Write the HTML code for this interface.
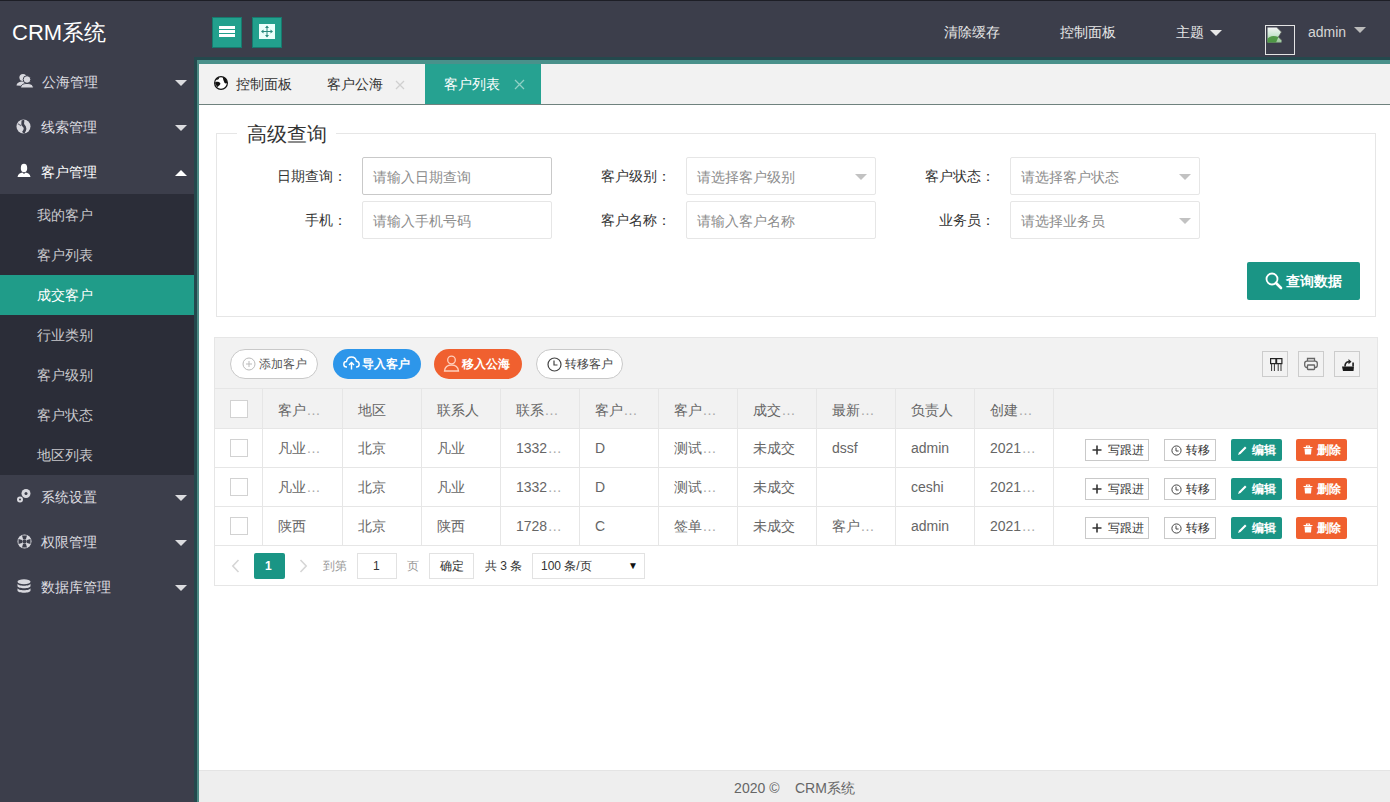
<!DOCTYPE html>
<html><head><meta charset="utf-8">
<style>
*{box-sizing:border-box;margin:0;padding:0}
html,body{width:1390px;height:802px;overflow:hidden;background:#fff;font-family:"Liberation Sans",sans-serif;font-size:14px;color:#666}
.abs{position:absolute}
#header{position:absolute;left:0;top:0;width:1390px;height:60px;background:#3c3e4b;border-top:1px solid #1d1e26}
#side{position:absolute;left:0;top:60px;width:196px;height:742px;background:#3c3e4b}
#bl{position:absolute;left:194px;top:57px;width:3px;height:745px;background:#24494d}
#bl2{position:absolute;left:197px;top:60px;width:2px;height:742px;background:#4e8a84}
#bt{position:absolute;left:194px;top:57px;width:1196px;height:3px;background:#24494d}
#bt2{position:absolute;left:197px;top:60px;width:1193px;height:4px;background:#4a918b}
.t{position:absolute;white-space:nowrap;line-height:20px}
.w{color:#fff}
.nav{position:absolute;left:0;width:196px;height:45px}
.sub{position:absolute;left:0;top:194px;width:196px;height:281px;background:#2b2d38}
.tri{position:absolute;width:0;height:0;border-left:6px solid transparent;border-right:6px solid transparent}
.tabs{position:absolute;left:199px;top:64px;width:1191px;height:40px;background:#f2f2f2}
.tabline{position:absolute;left:199px;top:104px;width:1191px;height:1px;background:#6f827e}
.fs{position:absolute;left:216px;top:133px;width:1160px;height:184px;border:1px solid #e6e6e6}
.inp{position:absolute;width:190px;height:38px;border:1px solid #e6e6e6;background:#fff;border-radius:2px}
.ph{position:absolute;left:10px;top:9px;color:#8c8c8c;line-height:20px;white-space:nowrap}
.lbl{position:absolute;width:110px;text-align:right;color:#333;line-height:20px;white-space:nowrap}
.tbl{position:absolute;left:214px;top:337px;width:1164px;height:249px;border:1px solid #e6e6e6}
.btn{position:absolute;height:30px;border-radius:100px;font-size:12px;line-height:28px;white-space:nowrap}
.cb{position:absolute;width:18px;height:18px;border:1px solid #d2d2d2;background:#fff;border-radius:0}
.vl{position:absolute;width:1px;background:#e6e6e6}
.hl{position:absolute;height:1px;background:#e6e6e6}
.cell{position:absolute;line-height:20px;white-space:nowrap;width:49px;color:#666}
.el{color:#a8a8a8;margin-left:1px;letter-spacing:0.6px}
.xs{position:absolute;height:22px;font-size:12px;line-height:20px;white-space:nowrap;border-radius:2px}
</style></head><body>

<!-- HEADER -->
<div id="header"></div>
<div class="t w" style="left:12px;top:21px;font-size:22px;line-height:24px">CRM系统</div>
<div class="abs" style="left:212px;top:17px;width:30px;height:31px;background:#22a08d;border:1px solid #167a6e"></div>
<div class="abs" style="left:219px;top:26px;width:16px;height:3px;background:#fff"></div>
<div class="abs" style="left:219px;top:30px;width:16px;height:3px;background:#fff"></div>
<div class="abs" style="left:219px;top:34px;width:16px;height:3px;background:#fff"></div>
<div class="abs" style="left:252px;top:17px;width:30px;height:31px;background:#22a08d;border:1px solid #167a6e"></div>
<svg class="abs" style="left:259px;top:24px" width="16" height="15" viewBox="0 0 16 15">
<rect x="0" y="0" width="16" height="15" fill="#eafffb"/>
<path d="M8 2.5 V12.5 M3 7.5 H13" stroke="#2a8a7e" stroke-width="1"/>
<path d="M8 1.5 L10 4 H6 Z M8 13.5 L10 11 H6 Z M2 7.5 L4.5 5.5 V9.5 Z M14 7.5 L11.5 5.5 V9.5 Z" fill="#2a8a7e"/>
</svg>
<div class="t" style="left:944px;top:22px;color:#e8e8e8">清除缓存</div>
<div class="t" style="left:1060px;top:22px;color:#e8e8e8">控制面板</div>
<div class="t" style="left:1176px;top:22px;color:#e8e8e8">主题</div>
<div class="tri" style="left:1210px;top:30px;border-top:6px solid #e8e8e8"></div>
<div class="abs" style="left:1265px;top:25px;width:30px;height:30px;border:1px solid #e4e4e4"></div>
<svg class="abs" style="left:1267px;top:27px" width="17" height="17" viewBox="0 0 17 17">
<defs><linearGradient id="pg" x1="0" y1="0" x2="0" y2="1"><stop offset="0" stop-color="#f4f4f4"/><stop offset="0.45" stop-color="#cfe8d6"/><stop offset="1" stop-color="#9cc79a"/></linearGradient></defs>
<path d="M0.5 0.5 H10 L14.5 5 L11.5 10 L14.5 13 V15.5 H0.5 Z" fill="url(#pg)"/>
<path d="M0.5 11.5 C4 8 8 9 11.5 10 L9 15.5 H0.5 Z" fill="#3f8e35" opacity="0.85"/>
<path d="M10 0.5 L14.5 5 L11.5 10 L14.5 13" fill="none" stroke="#555" stroke-width="0.8"/>
</svg>
<div class="t" style="left:1308px;top:22px;color:#d6d6d6">admin</div>
<div class="tri" style="left:1354px;top:27px;border-top:6px solid #bbb"></div>

<!-- SIDEBAR -->
<div id="side"></div>
<div class="sub"></div>
<div class="abs" style="left:0;top:275px;width:196px;height:40px;background:#209c89"></div>

<svg class="abs" style="left:16px;top:73px" width="18" height="16" viewBox="0 0 18 16">
<circle cx="7" cy="4.5" r="3.6" fill="#d8d8de"/>
<path d="M0.5 12.5 C1 9.5 3.5 8.5 7 8.5 C8 8.5 9 8.7 9.5 9 L8 13 Z" fill="#d8d8de"/>
<circle cx="11" cy="6.5" r="3.8" fill="#d8d8de" stroke="#3c3e4b" stroke-width="1"/>
<path d="M4.5 15 C5 11.5 7.5 10.5 11 10.5 C14.5 10.5 17 11.5 17.5 15 Z" fill="#d8d8de" stroke="#3c3e4b" stroke-width="1"/>
</svg>
<div class="t" style="left:42px;top:72px;color:#dcdce0">公海管理</div>
<div class="tri" style="left:175px;top:80px;border-top:6px solid #dcdce0"></div>

<svg class="abs" style="left:16px;top:119px" width="15" height="15" viewBox="0 0 15 15">
<circle cx="7.5" cy="7.5" r="7" fill="#d8d8de"/>
<path d="M6.8 1.2 C7.5 3.5 5.5 4.5 7.5 6.5 C9.5 8.5 10 10 7.2 13.8" fill="none" stroke="#3c3e4b" stroke-width="2.8"/>
<path d="M1.8 4.8 C3.5 5.5 4.5 6 5 7" fill="none" stroke="#6a6c78" stroke-width="1.2"/>
</svg>
<div class="t" style="left:41px;top:117px;color:#dcdce0">线索管理</div>
<div class="tri" style="left:175px;top:125px;border-top:6px solid #dcdce0"></div>

<svg class="abs" style="left:17px;top:163px" width="14" height="15" viewBox="0 0 14 15">
<ellipse cx="7" cy="5" rx="3.2" ry="4.3" fill="#fff"/>
<path d="M0.5 14 C1 11 3 10 5.5 9.5 L7 11 L8.5 9.5 C11 10 13 11 13.5 14 Z" fill="#fff"/>
</svg>
<div class="t w" style="left:41px;top:162px">客户管理</div>
<div class="tri" style="left:175px;top:170px;border-bottom:6px solid #fff"></div>

<div class="t" style="left:37px;top:205px;color:#c8c8cc">我的客户</div>
<div class="t" style="left:37px;top:245px;color:#c8c8cc">客户列表</div>
<div class="t w" style="left:37px;top:285px">成交客户</div>
<div class="t" style="left:37px;top:325px;color:#c8c8cc">行业类别</div>
<div class="t" style="left:37px;top:365px;color:#c8c8cc">客户级别</div>
<div class="t" style="left:37px;top:405px;color:#c8c8cc">客户状态</div>
<div class="t" style="left:37px;top:445px;color:#c8c8cc">地区列表</div>

<svg class="abs" style="left:16px;top:488px" width="16" height="16" viewBox="0 0 16 16">
<circle cx="10" cy="5.5" r="4.5" fill="#d8d8de"/><circle cx="10" cy="5.5" r="1.5" fill="#3c3e4b"/>
<circle cx="4" cy="11.5" r="3" fill="#d8d8de"/><circle cx="4" cy="11.5" r="1" fill="#3c3e4b"/>
</svg>
<div class="t" style="left:41px;top:487px;color:#dcdce0">系统设置</div>
<div class="tri" style="left:175px;top:495px;border-top:6px solid #dcdce0"></div>

<svg class="abs" style="left:17px;top:534px" width="15" height="15" viewBox="0 0 15 15">
<circle cx="7.5" cy="7.5" r="7" fill="#d8d8de"/>
<circle cx="7.5" cy="7.5" r="2.2" fill="#3c3e4b"/>
<path d="M5 1.5 H10 L9 5 H6 Z M5 13.5 H10 L9 10 H6 Z M1.5 5 V10 L5 9 V6 Z M13.5 5 V10 L10 9 V6 Z" fill="#3c3e4b"/>
</svg>
<div class="t" style="left:41px;top:532px;color:#dcdce0">权限管理</div>
<div class="tri" style="left:175px;top:540px;border-top:6px solid #dcdce0"></div>

<svg class="abs" style="left:17px;top:579px" width="14" height="15" viewBox="0 0 14 15">
<ellipse cx="7" cy="2.8" rx="6.5" ry="2.5" fill="#d8d8de"/>
<path d="M0.5 4.5 C0.5 7.5 13.5 7.5 13.5 4.5 V7 C13.5 10 0.5 10 0.5 7 Z" fill="#d8d8de"/>
<path d="M0.5 9 C0.5 12 13.5 12 13.5 9 V11.5 C13.5 14.5 0.5 14.5 0.5 11.5 Z" fill="#d8d8de"/>
</svg>
<div class="t" style="left:41px;top:577px;color:#dcdce0">数据库管理</div>
<div class="tri" style="left:175px;top:585px;border-top:6px solid #dcdce0"></div>

<!-- BODY FRAME -->
<div id="bt"></div>
<div id="bl"></div>
<div id="bt2"></div>
<div id="bl2"></div>
<div class="tabs"></div>
<div class="tabline"></div>
<svg class="abs" style="left:214px;top:76px" width="14" height="14" viewBox="0 0 14 14">
<circle cx="7" cy="7" r="6.4" fill="#fff" stroke="#111" stroke-width="1.2"/>
<path d="M1.8 4.2 C2.5 2.8 3.8 1.8 5.2 1.3 L4.8 3 C3.8 3.6 2.8 4.1 1.8 4.2 Z" fill="#111"/>
<path d="M1.2 6.2 C2.8 5.4 5 5.6 6.2 7 C6.8 8 5.8 9.4 4.8 9.8 C4.2 10.8 3.6 11.2 3 10.8 C2.6 9.8 2.2 9 1.2 8.2 Z" fill="#111"/>
<path d="M8.8 1 C11 1.6 12.8 3.6 13.3 6.4 C12.6 7.6 11.6 7.8 10.6 7 C10 5.4 9 4 8.8 1 Z" fill="#111"/>
</svg>
<div class="t" style="left:236px;top:74px;color:#333">控制面板</div>
<div class="t" style="left:327px;top:74px;color:#333">客户公海</div>
<svg class="abs" style="left:395px;top:80px" width="10" height="10" viewBox="0 0 10 10"><path d="M1 1 L9 9 M9 1 L1 9" stroke="#d0d0d0" stroke-width="1.3"/></svg>
<div class="abs" style="left:425px;top:64px;width:116px;height:40px;background:#26a291"></div>
<div class="t w" style="left:444px;top:74px">客户列表</div>
<svg class="abs" style="left:514px;top:79px" width="11" height="11" viewBox="0 0 11 11"><path d="M1 1 L10 10 M10 1 L1 10" stroke="#8fd0c5" stroke-width="1.3"/></svg>

<!-- FIELDSET -->
<div class="fs"></div>
<div class="abs" style="left:237px;top:120px;width:99px;height:26px;background:#fff"></div>
<div class="t" style="left:247px;top:121px;font-size:20px;line-height:26px;color:#333">高级查询</div>

<div class="lbl" style="left:237px;top:166px">日期查询：</div>
<div class="inp" style="left:362px;top:157px;border-color:#c9c9c9"><div class="ph">请输入日期查询</div></div>
<div class="lbl" style="left:561px;top:166px">客户级别：</div>
<div class="inp" style="left:686px;top:157px"><div class="ph">请选择客户级别</div><div class="tri" style="left:168px;top:16px;border-top:6px solid #c2c2c2"></div></div>
<div class="lbl" style="left:885px;top:166px">客户状态：</div>
<div class="inp" style="left:1010px;top:157px"><div class="ph">请选择客户状态</div><div class="tri" style="left:168px;top:16px;border-top:6px solid #c2c2c2"></div></div>

<div class="lbl" style="left:237px;top:210px">手机：</div>
<div class="inp" style="left:362px;top:201px"><div class="ph">请输入手机号码</div></div>
<div class="lbl" style="left:561px;top:210px">客户名称：</div>
<div class="inp" style="left:686px;top:201px"><div class="ph">请输入客户名称</div></div>
<div class="lbl" style="left:885px;top:210px">业务员：</div>
<div class="inp" style="left:1010px;top:201px"><div class="ph">请选择业务员</div><div class="tri" style="left:168px;top:16px;border-top:6px solid #c2c2c2"></div></div>

<div class="abs" style="left:1247px;top:262px;width:113px;height:38px;background:#1a9585;border-radius:2px"></div>
<svg class="abs" style="left:1265px;top:272px" width="18" height="18" viewBox="0 0 18 18">
<circle cx="7" cy="7" r="5.5" fill="none" stroke="#fff" stroke-width="1.8"/>
<path d="M11 11 L16 16" stroke="#fff" stroke-width="2.6" stroke-linecap="round"/>
</svg>
<div class="t w" style="left:1286px;top:271px;font-weight:700">查询数据</div>

<!-- TABLE -->
<div class="tbl"></div>
<div class="abs" style="left:215px;top:338px;width:1162px;height:90px;background:#f2f2f2"></div>
<div class="hl" style="left:215px;top:388px;width:1162px"></div>
<div class="hl" style="left:215px;top:428px;width:1162px"></div>
<div class="hl" style="left:215px;top:467px;width:1162px"></div>
<div class="hl" style="left:215px;top:506px;width:1162px"></div>
<div class="hl" style="left:215px;top:545px;width:1162px"></div>

<div class="btn" style="left:230px;top:349px;width:88px;border:1px solid #c9c9c9;background:#fff;color:#555">
<svg class="abs" style="left:11px;top:7px" width="14" height="14" viewBox="0 0 14 14"><circle cx="7" cy="7" r="6" fill="none" stroke="#bbb" stroke-width="1"/><path d="M7 4 V10 M4 7 H10" stroke="#bbb" stroke-width="1"/></svg>
<span class="abs" style="left:28px;top:0">添加客户</span></div>
<div class="btn" style="left:333px;top:349px;width:88px;background:#2d96ea;color:#fff">
<svg class="abs" style="left:10px;top:7px" width="17" height="14" viewBox="0 0 17 14"><path d="M4 11 H3.5 C1.8 11 0.8 9.8 0.8 8.2 C0.8 6.6 2 5.5 3.5 5.5 C3.8 3 5.8 1 8.5 1 C11 1 13 2.8 13.3 5.2 C15 5.3 16.2 6.6 16.2 8.2 C16.2 9.8 15 11 13.3 11 H13" fill="none" stroke="#fff" stroke-width="1.4"/><path d="M8.5 13.5 V6.5 M6 9 L8.5 6.5 L11 9" fill="none" stroke="#fff" stroke-width="1.4"/></svg>
<span class="abs" style="left:29px;top:1px;font-weight:700">导入客户</span></div>
<div class="btn" style="left:434px;top:349px;width:88px;background:#f0602f;color:#fff">
<svg class="abs" style="left:9px;top:6px" width="17" height="17" viewBox="0 0 17 17"><circle cx="8.5" cy="5" r="3.8" fill="none" stroke="#ffd0bd" stroke-width="1.3"/><path d="M1.5 16 C2 11.5 4.5 10 8.5 10 C12.5 10 15 11.5 15.5 16 Z" fill="none" stroke="#ffd0bd" stroke-width="1.3"/></svg>
<span class="abs" style="left:28px;top:1px;font-weight:700">移入公海</span></div>
<div class="btn" style="left:536px;top:349px;width:87px;border:1px solid #c9c9c9;background:#fff;color:#444">
<svg class="abs" style="left:10px;top:7px" width="15" height="15" viewBox="0 0 15 15"><circle cx="7.5" cy="7.5" r="6.5" fill="none" stroke="#444" stroke-width="1.2"/><path d="M7 3.5 V8 H10.5" fill="none" stroke="#444" stroke-width="1.2"/></svg>
<span class="abs" style="left:28px;top:0">转移客户</span></div>

<div class="abs" style="left:1262px;top:351px;width:26px;height:26px;border:1px solid #ccc"></div>
<svg class="abs" style="left:1267px;top:356px" width="16" height="16" viewBox="0 0 16 16"><rect x="3.6" y="2.6" width="5.3" height="5" fill="none" stroke="#222" stroke-width="1.2"/><rect x="9.6" y="2.6" width="5.3" height="5" fill="none" stroke="#222" stroke-width="1.2"/><path d="M4.6 7.5 V15 M7.4 7.5 V15 M11.2 7.5 V15 M14 7.5 V15" stroke="#333" stroke-width="1"/></svg>
<div class="abs" style="left:1298px;top:351px;width:26px;height:26px;border:1px solid #ccc"></div>
<svg class="abs" style="left:1303px;top:356px" width="16" height="16" viewBox="0 0 16 16"><path d="M4.5 5 V2.5 H11.5 V5" fill="none" stroke="#666" stroke-width="1.3"/><rect x="1.7" y="5.2" width="12.6" height="6.3" rx="2.2" fill="none" stroke="#666" stroke-width="1.3"/><rect x="4.5" y="9" width="7" height="4.5" rx="0.5" fill="#f2f2f2" stroke="#666" stroke-width="1.3"/></svg>
<div class="abs" style="left:1334px;top:351px;width:26px;height:26px;border:1px solid #ccc"></div>
<svg class="abs" style="left:1339px;top:356px" width="16" height="16" viewBox="0 0 16 16"><path d="M3 10.5 H15 L14.5 15 H4 Z" fill="#1a1a1a"/><path d="M13.2 6.5 H15 V10.5 H13.2 Z" fill="#333"/><path d="M6 10.5 C6 7.5 7.5 5.8 10 5.8" fill="none" stroke="#222" stroke-width="1.6"/><path d="M9.5 3 L12.5 5.8 L9.5 8.2 Z" fill="#222"/></svg>

<!-- column lines -->
<div class="vl" style="left:262px;top:388px;height:157px"></div>
<div class="vl" style="left:342px;top:388px;height:157px"></div>
<div class="vl" style="left:421px;top:388px;height:157px"></div>
<div class="vl" style="left:500px;top:388px;height:157px"></div>
<div class="vl" style="left:579px;top:388px;height:157px"></div>
<div class="vl" style="left:658px;top:388px;height:157px"></div>
<div class="vl" style="left:737px;top:388px;height:157px"></div>
<div class="vl" style="left:816px;top:388px;height:157px"></div>
<div class="vl" style="left:895px;top:388px;height:157px"></div>
<div class="vl" style="left:974px;top:388px;height:157px"></div>
<div class="vl" style="left:1053px;top:388px;height:157px"></div>

<div class="cb" style="left:230px;top:400px"></div>
<div class="cb" style="left:230px;top:439px"></div>
<div class="cb" style="left:230px;top:478px"></div>
<div class="cb" style="left:230px;top:517px"></div>

<div id="rows"></div>
<div class="cell" style="left:278px;top:400px">客户<span class="el">...</span></div>
<div class="cell" style="left:358px;top:400px">地区</div>
<div class="cell" style="left:437px;top:400px">联系人</div>
<div class="cell" style="left:516px;top:400px">联系<span class="el">...</span></div>
<div class="cell" style="left:595px;top:400px">客户<span class="el">...</span></div>
<div class="cell" style="left:674px;top:400px">客户<span class="el">...</span></div>
<div class="cell" style="left:753px;top:400px">成交<span class="el">...</span></div>
<div class="cell" style="left:832px;top:400px">最新<span class="el">...</span></div>
<div class="cell" style="left:911px;top:400px">负责人</div>
<div class="cell" style="left:990px;top:400px">创建<span class="el">...</span></div>

<div class="cell" style="left:278px;top:438px">凡业<span class="el">...</span></div>
<div class="cell" style="left:358px;top:438px">北京</div>
<div class="cell" style="left:437px;top:438px">凡业</div>
<div class="cell" style="left:516px;top:438px">1332<span class="el">...</span></div>
<div class="cell" style="left:595px;top:438px">D</div>
<div class="cell" style="left:674px;top:438px">测试<span class="el">...</span></div>
<div class="cell" style="left:753px;top:438px">未成交</div>
<div class="cell" style="left:832px;top:438px">dssf</div>
<div class="cell" style="left:911px;top:438px">admin</div>
<div class="cell" style="left:990px;top:438px">2021<span class="el">...</span></div>

<div class="cell" style="left:278px;top:477px">凡业<span class="el">...</span></div>
<div class="cell" style="left:358px;top:477px">北京</div>
<div class="cell" style="left:437px;top:477px">凡业</div>
<div class="cell" style="left:516px;top:477px">1332<span class="el">...</span></div>
<div class="cell" style="left:595px;top:477px">D</div>
<div class="cell" style="left:674px;top:477px">测试<span class="el">...</span></div>
<div class="cell" style="left:753px;top:477px">未成交</div>
<div class="cell" style="left:911px;top:477px">ceshi</div>
<div class="cell" style="left:990px;top:477px">2021<span class="el">...</span></div>

<div class="cell" style="left:278px;top:516px">陕西</div>
<div class="cell" style="left:358px;top:516px">北京</div>
<div class="cell" style="left:437px;top:516px">陕西</div>
<div class="cell" style="left:516px;top:516px">1728<span class="el">...</span></div>
<div class="cell" style="left:595px;top:516px">C</div>
<div class="cell" style="left:674px;top:516px">签单<span class="el">...</span></div>
<div class="cell" style="left:753px;top:516px">未成交</div>
<div class="cell" style="left:832px;top:516px">客户<span class="el">...</span></div>
<div class="cell" style="left:911px;top:516px">admin</div>
<div class="cell" style="left:990px;top:516px">2021<span class="el">...</span></div>

<!-- action buttons rows -->
<div class="xs" style="left:1085px;top:439px;width:64px;border:1px solid #c9c9c9;background:#fff;color:#333;border-radius:0"><svg class="abs" style="left:6px;top:5px" width="10" height="10" viewBox="0 0 10 10"><path d="M5 0.5 V9.5 M0.5 5 H9.5" stroke="#333" stroke-width="1.6"/></svg><span class="abs" style="left:22px;top:0">写跟进</span></div>
<div class="xs" style="left:1164px;top:439px;width:52px;border:1px solid #c9c9c9;background:#fff;color:#333;border-radius:0"><svg class="abs" style="left:6px;top:5px" width="11" height="11" viewBox="0 0 11 11"><circle cx="5.5" cy="5.5" r="4.6" fill="none" stroke="#444" stroke-width="1"/><path d="M5 2.6 V6 H7.6" fill="none" stroke="#444" stroke-width="1"/></svg><span class="abs" style="left:21px;top:0">转移</span></div>
<div class="xs" style="left:1231px;top:439px;width:51px;background:#1a9585;color:#fff"><svg class="abs" style="left:6px;top:6px" width="11" height="11" viewBox="0 0 11 11"><path d="M1 10 L2 7.5 L8 1.5 L9.5 3 L3.5 9 Z" fill="#fff"/></svg><span class="abs" style="left:21px;top:1px;font-weight:700">编辑</span></div>
<div class="xs" style="left:1296px;top:439px;width:51px;background:#f0602f;color:#fff"><svg class="abs" style="left:7px;top:6px" width="10" height="10" viewBox="0 0 10 10"><path d="M0.5 2.5 H9.5 M3.5 2.5 V1 H6.5 V2.5" fill="none" stroke="#fff" stroke-width="1.2"/><path d="M1.5 3.5 H8.5 L8 9.5 H2 Z" fill="#fff"/></svg><span class="abs" style="left:21px;top:1px;font-weight:700">删除</span></div>
<div class="xs" style="left:1085px;top:478px;width:64px;border:1px solid #c9c9c9;background:#fff;color:#333;border-radius:0"><svg class="abs" style="left:6px;top:5px" width="10" height="10" viewBox="0 0 10 10"><path d="M5 0.5 V9.5 M0.5 5 H9.5" stroke="#333" stroke-width="1.6"/></svg><span class="abs" style="left:22px;top:0">写跟进</span></div>
<div class="xs" style="left:1164px;top:478px;width:52px;border:1px solid #c9c9c9;background:#fff;color:#333;border-radius:0"><svg class="abs" style="left:6px;top:5px" width="11" height="11" viewBox="0 0 11 11"><circle cx="5.5" cy="5.5" r="4.6" fill="none" stroke="#444" stroke-width="1"/><path d="M5 2.6 V6 H7.6" fill="none" stroke="#444" stroke-width="1"/></svg><span class="abs" style="left:21px;top:0">转移</span></div>
<div class="xs" style="left:1231px;top:478px;width:51px;background:#1a9585;color:#fff"><svg class="abs" style="left:6px;top:6px" width="11" height="11" viewBox="0 0 11 11"><path d="M1 10 L2 7.5 L8 1.5 L9.5 3 L3.5 9 Z" fill="#fff"/></svg><span class="abs" style="left:21px;top:1px;font-weight:700">编辑</span></div>
<div class="xs" style="left:1296px;top:478px;width:51px;background:#f0602f;color:#fff"><svg class="abs" style="left:7px;top:6px" width="10" height="10" viewBox="0 0 10 10"><path d="M0.5 2.5 H9.5 M3.5 2.5 V1 H6.5 V2.5" fill="none" stroke="#fff" stroke-width="1.2"/><path d="M1.5 3.5 H8.5 L8 9.5 H2 Z" fill="#fff"/></svg><span class="abs" style="left:21px;top:1px;font-weight:700">删除</span></div>
<div class="xs" style="left:1085px;top:517px;width:64px;border:1px solid #c9c9c9;background:#fff;color:#333;border-radius:0"><svg class="abs" style="left:6px;top:5px" width="10" height="10" viewBox="0 0 10 10"><path d="M5 0.5 V9.5 M0.5 5 H9.5" stroke="#333" stroke-width="1.6"/></svg><span class="abs" style="left:22px;top:0">写跟进</span></div>
<div class="xs" style="left:1164px;top:517px;width:52px;border:1px solid #c9c9c9;background:#fff;color:#333;border-radius:0"><svg class="abs" style="left:6px;top:5px" width="11" height="11" viewBox="0 0 11 11"><circle cx="5.5" cy="5.5" r="4.6" fill="none" stroke="#444" stroke-width="1"/><path d="M5 2.6 V6 H7.6" fill="none" stroke="#444" stroke-width="1"/></svg><span class="abs" style="left:21px;top:0">转移</span></div>
<div class="xs" style="left:1231px;top:517px;width:51px;background:#1a9585;color:#fff"><svg class="abs" style="left:6px;top:6px" width="11" height="11" viewBox="0 0 11 11"><path d="M1 10 L2 7.5 L8 1.5 L9.5 3 L3.5 9 Z" fill="#fff"/></svg><span class="abs" style="left:21px;top:1px;font-weight:700">编辑</span></div>
<div class="xs" style="left:1296px;top:517px;width:51px;background:#f0602f;color:#fff"><svg class="abs" style="left:7px;top:6px" width="10" height="10" viewBox="0 0 10 10"><path d="M0.5 2.5 H9.5 M3.5 2.5 V1 H6.5 V2.5" fill="none" stroke="#fff" stroke-width="1.2"/><path d="M1.5 3.5 H8.5 L8 9.5 H2 Z" fill="#fff"/></svg><span class="abs" style="left:21px;top:1px;font-weight:700">删除</span></div>


<!-- pagination -->
<svg class="abs" style="left:231px;top:559px" width="9" height="14" viewBox="0 0 9 14"><path d="M7.5 1 L1.8 7 L7.5 13" fill="none" stroke="#d6d6d6" stroke-width="1.6"/></svg>
<div class="abs" style="left:254px;top:553px;width:31px;height:26px;background:#1a9585;border-radius:2px"></div>
<div class="t w" style="left:265px;top:556px;font-size:12px;font-weight:bold">1</div>
<svg class="abs" style="left:299px;top:559px" width="9" height="14" viewBox="0 0 9 14"><path d="M1.5 1 L7.2 7 L1.5 13" fill="none" stroke="#d6d6d6" stroke-width="1.6"/></svg>
<div class="t" style="left:323px;top:556px;font-size:12px;color:#999">到第</div>
<div class="abs" style="left:357px;top:553px;width:40px;height:26px;border:1px solid #e2e2e2"></div>
<div class="t" style="left:373px;top:556px;font-size:12px;color:#333">1</div>
<div class="t" style="left:407px;top:556px;font-size:12px;color:#999">页</div>
<div class="abs" style="left:429px;top:553px;width:45px;height:26px;border:1px solid #e2e2e2"></div>
<div class="t" style="left:440px;top:556px;font-size:12px;color:#333">确定</div>
<div class="t" style="left:485px;top:556px;font-size:12px;color:#333">共 3 条</div>
<div class="abs" style="left:532px;top:553px;width:113px;height:26px;border:1px solid #e2e2e2"></div>
<div class="t" style="left:541px;top:556px;font-size:12px;color:#333">100 条/页</div>
<div class="t" style="left:628px;top:556px;font-size:10px;color:#111">▼</div>

<!-- FOOTER -->
<div class="abs" style="left:199px;top:770px;width:1191px;height:32px;background:#eee;border-top:1px solid #e4e4e4"></div>
<div class="t" style="left:0;top:778px;width:1390px;padding-left:199px;text-align:center;color:#666">2020 ©&nbsp;&nbsp;&nbsp;&nbsp;CRM系统</div>

</body></html>
